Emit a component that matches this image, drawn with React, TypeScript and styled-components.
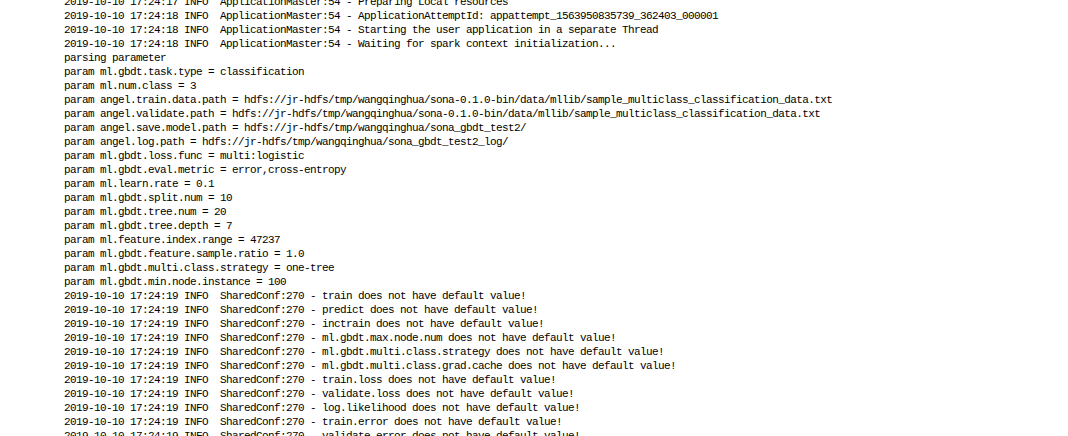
import React from "react";
import styled, { createGlobalStyle } from "styled-components";

const Global = createGlobalStyle`
  html, body { margin: 0; padding: 0; background: #ffffff; }
  body { overflow: hidden; }
`;

const Console = styled.pre`
  margin: -5px 0 0 0;
  padding: 0 0 0 64px;
  font-family: "Liberation Mono", "DejaVu Sans Mono", monospace;
  font-size: 11px;
  letter-spacing: -0.6px;
  line-height: 14px;
  color: #000000;
  background: #ffffff;
  white-space: pre;
  height: 441px;
  overflow: hidden;
`;

const Line = styled.div`
  height: 14px;
`;

const ts = (s: string) => `2019-10-10 17:24:${s} INFO  `;
const am = (s: string, m: string) => `${ts(s)}ApplicationMaster:54 - ${m}`;
const sc = (m: string) => `${ts("19")}SharedConf:270 - ${m} does not have default value!`;
const dataPath =
  "hdfs://jr-hdfs/tmp/wangqinghua/sona-0.1.0-bin/data/mllib/sample_multiclass_classification_data.txt";

const lines: string[] = [
  am("17", "Preparing Local resources"),
  am("18", "ApplicationAttemptId: appattempt_1563950835739_362403_000001"),
  am("18", "Starting the user application in a separate Thread"),
  am("18", "Waiting for spark context initialization..."),
  "parsing parameter",
  "param ml.gbdt.task.type = classification",
  "param ml.num.class = 3",
  `param angel.train.data.path = ${dataPath}`,
  `param angel.validate.path = ${dataPath}`,
  "param angel.save.model.path = hdfs://jr-hdfs/tmp/wangqinghua/sona_gbdt_test2/",
  "param angel.log.path = hdfs://jr-hdfs/tmp/wangqinghua/sona_gbdt_test2_log/",
  "param ml.gbdt.loss.func = multi:logistic",
  "param ml.gbdt.eval.metric = error,cross-entropy",
  "param ml.learn.rate = 0.1",
  "param ml.gbdt.split.num = 10",
  "param ml.gbdt.tree.num = 20",
  "param ml.gbdt.tree.depth = 7",
  "param ml.feature.index.range = 47237",
  "param ml.gbdt.feature.sample.ratio = 1.0",
  "param ml.gbdt.multi.class.strategy = one-tree",
  "param ml.gbdt.min.node.instance = 100",
  sc("train"),
  sc("predict"),
  sc("inctrain"),
  sc("ml.gbdt.max.node.num"),
  sc("ml.gbdt.multi.class.strategy"),
  sc("ml.gbdt.multi.class.grad.cache"),
  sc("train.loss"),
  sc("validate.loss"),
  sc("log.likelihood"),
  sc("train.error"),
  sc("validate.error"),
];

export default function App() {
  return (
    <>
      <Global />
      <Console>
        {lines.map((l, i) => (
          <Line key={i}>{l}</Line>
        ))}
      </Console>
    </>
  );
}
